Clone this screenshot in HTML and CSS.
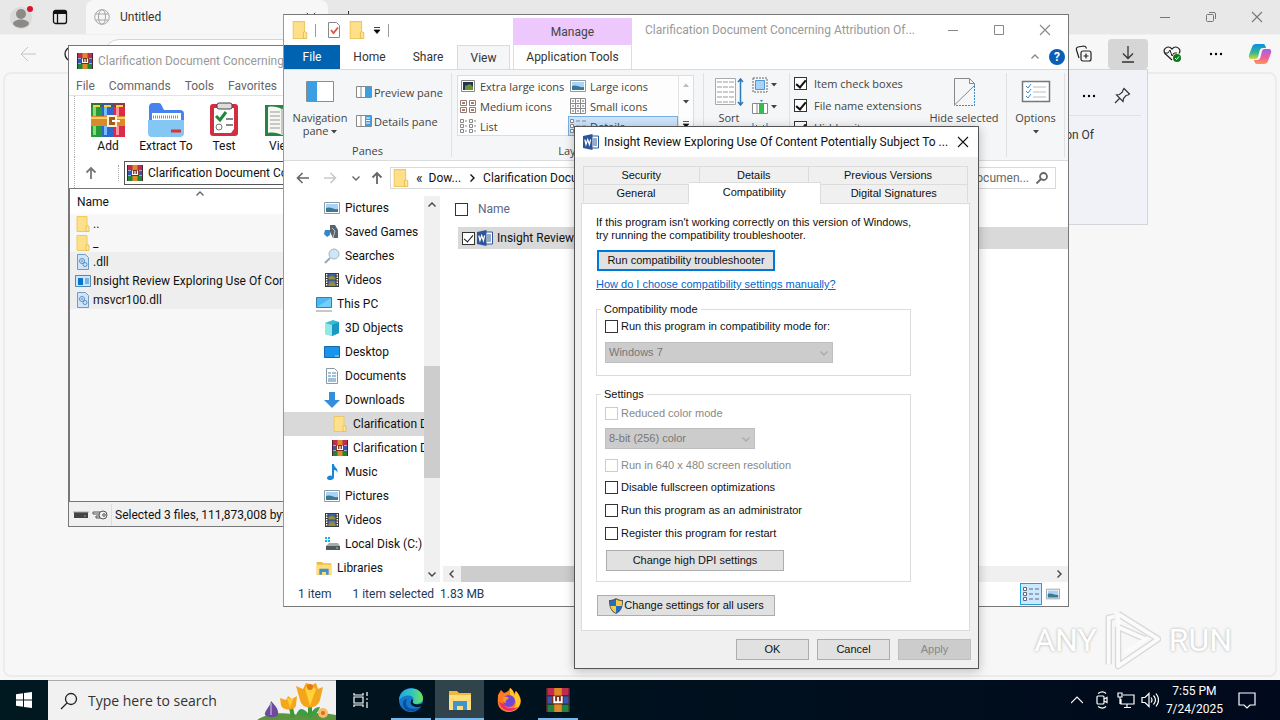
FILE: index.html
```html
<!DOCTYPE html>
<html lang="en">
<head>
    <meta charset="UTF-8">
    <meta name="viewport" content="width=device-width, initial-scale=1.0">
    <title>Desktop</title>
    <link rel="stylesheet" href="styles.css">
</head>
<body>
    <!-- Shared icons -->
    <svg class="sprite" aria-hidden="true">
        <symbol id="i-folder" viewBox="0 0 16 16">
            <path d="M2 .5h10v15H2z" fill="#ffe08a" stroke="#f0c862"/>
            <path d="M12 9.500l2 .8v5.200h-3V10z" fill="#ffe59a" stroke="#e5b94e" stroke-width=".8"/>
        </symbol>
        <symbol id="i-rar" viewBox="0 0 16 16">
            <path d="M0 0h16v5H0z" fill="#c02c4c"/>
            <path d="M0 5.500h16v5H0z" fill="#3a55b0"/>
            <path d="M0 11h16v5H0z" fill="#23823c"/>
            <path d="M0 0h1v16H0zM15 0h1v16h-1z" fill="#4b2430"/>
            <path d="M5.500 0h5v16h-5z" fill="#e08a25"/>
            <path d="M4 5h8v6H4z" fill="#7a2c1c"/>
            <path d="M5.500 5.500v4h5v-4M8 6v3.500" fill="none" stroke="#fff" stroke-width="1.200"/>
        </symbol>
        <symbol id="i-word" viewBox="0 0 16 16">
            <path d="M8.500 2h7v12h-7z" fill="#fff" stroke="#2b579a"/>
            <path d="M10 5h4M10 7h4M10 9h4M10 11h4" stroke="#2b579a"/>
            <path d="M0 2l9.500-2v16L0 14z" fill="#2b579a"/>
            <path d="M1.800 5.500l1.200 5 1.700-5 1.700 5 1.200-5" fill="none" stroke="#fff" stroke-width="1.200"/>
        </symbol>
        <symbol id="i-picture" viewBox="0 0 16 16">
            <path d="M.5 2.500h15v11H.5z" fill="#fff" stroke="#8c9aa5"/>
            <path d="M2 4h12v8H2z" fill="#a9d3f5"/>
            <path d="M2 8c4-2 8 2 12 1v3H2z" fill="#3d7796"/>
        </symbol>
        <symbol id="i-video" viewBox="0 0 16 16">
            <path d="M1 1h14v14H1z" fill="#3a3a3a"/>
            <path d="M4.500 2h7v5.500h-7z" fill="#4262a8"/>
            <path d="M4.500 8.500h7V14h-7z" fill="#6374b3"/>
            <path d="M4.500 5l4-1 3 2v1.500h-7zM4.500 12l4-2 3 2v2h-7z" fill="#8d9430"/>
            <path d="M2.700 2v12M13.300 2v12" stroke="#fff" stroke-width="1.400" stroke-dasharray="1.500 1"/>
        </symbol>
        <symbol id="i-dll" viewBox="0 0 16 16">
            <path d="M2.500.5h8l3 3v12h-11z" fill="#cfe4f8" stroke="#6d9cc5"/>
            <circle cx="7" cy="7" r="2.500" fill="none" stroke="#5b8ec0"/>
            <circle cx="10" cy="10.500" r="2" fill="none" stroke="#5b8ec0"/>
            <circle cx="7" cy="7" r=".8" fill="#3a78b8"/>
        </symbol>
        <symbol id="i-left" viewBox="0 0 16 16"><path d="M14 8H2.500M7.500 3l-5 5 5 5" fill="none" stroke="currentColor" stroke-width="1.600"/></symbol>
        <symbol id="i-up" viewBox="0 0 16 16"><path d="M8 14V3M3.500 7.500L8 3l4.500 4.500" fill="none" stroke="currentColor" stroke-width="1.800"/></symbol>
        <symbol id="i-chevron" viewBox="0 0 10 10"><path d="M1.500 3.500L5 7l3.500-3.500" fill="none" stroke="currentColor" stroke-width="1.400"/></symbol>
        <symbol id="i-caret" viewBox="0 0 6 4"><path d="M0 0h6L3 3.500z" fill="currentColor"/></symbol>
        <symbol id="i-close" viewBox="0 0 12 12"><path d="M1 1l10 10M11 1L1 11" fill="none" stroke="currentColor" stroke-width="1.100"/></symbol>
        <symbol id="i-min" viewBox="0 0 12 12"><path d="M1 6.500h10" stroke="currentColor"/></symbol>
        <symbol id="i-dots" viewBox="0 0 16 16"><circle cx="3" cy="8" r="1.200"/><circle cx="8" cy="8" r="1.200"/><circle cx="13" cy="8" r="1.200"/></symbol>
        <symbol id="i-search" viewBox="0 0 16 16"><circle cx="9.500" cy="6.500" r="3.500" fill="none" stroke="currentColor" stroke-width="1.800"/><path d="M7 9l-4.500 4.500" stroke="currentColor" stroke-width="1.800"/></symbol>
        <symbol id="i-explorer" viewBox="0 0 24 24">
            <path d="M1 3h8l2 2h12v17H1z" fill="#f0b93a"/>
            <path d="M1 7h22v15H1z" fill="#ffdc7c"/>
            <path d="M5 22v-9h14v9h-4v-4H9v4z" fill="#3f93cf"/>
        </symbol>
    </svg>

    <div class="desktop">
        <!-- Browser -->
        <main class="browser">
            <div class="browser-tabs">
                <div class="browser-corner">
                    <svg class="avatar" viewBox="0 0 28 28">
                        <circle cx="13" cy="15" r="11" fill="#dcdad8"/>
                        <circle cx="13" cy="11" r="5" fill="#8d8986"/>
                        <path d="M5 21c0-6 16-6 16 0-3 5-13 5-16 0z" fill="#8d8986"/>
                        <circle cx="22" cy="6" r="3" fill="#d8152b"/>
                    </svg>
                    <svg class="icon-16" viewBox="0 0 16 16"><rect x="1.500" y="1.500" width="13" height="13" rx="2" fill="none" stroke="#111" stroke-width="1.300"/><path d="M1.500 3.500h13" stroke="#111" stroke-width="3"/><path d="M5.500 3v11" stroke="#111" stroke-width="1.300"/></svg>
                </div>
                <div class="browser-tab">
                    <svg class="icon-16" viewBox="0 0 16 16" fill="none" stroke="#a5a5a5"><circle cx="8" cy="8" r="7.300"/><ellipse cx="8" cy="8" rx="3.500" ry="7.300"/><path d="M1.500 5h13M1.500 11h13"/></svg>
                    <span>Untitled</span>
                    <button class="tab-close" aria-label="Close tab"><svg class="icon-10"><use href="#i-close"/></svg></button>
                </div>
                <button class="new-tab" aria-label="New tab"><svg class="icon-12" viewBox="0 0 12 12"><path d="M6.500 0v12M0 6.500h12" stroke="#333"/></svg></button>
                <div class="browser-buttons">
                    <button aria-label="Minimize"><svg class="icon-12"><use href="#i-min"/></svg></button>
                    <button aria-label="Restore"><svg class="icon-12" viewBox="0 0 12 12" fill="none" stroke="currentColor"><rect x="1.500" y="3.500" width="7" height="7" rx="1"/><path d="M4 1.500h5a1.500 1.500 0 0 1 1.500 1.500v5"/></svg></button>
                    <button aria-label="Close"><svg class="icon-12"><use href="#i-close"/></svg></button>
                </div>
            </div>
            <div class="browser-toolbar">
                <button class="browser-back" aria-label="Back"><svg class="icon-16" viewBox="0 0 16 16"><path d="M16 8H1M8 1L1 8l7 7" fill="none" stroke="#c4c4c4"/></svg></button>
                <button class="browser-reload" aria-label="Reload"><svg class="icon-16" viewBox="0 0 16 16"><circle cx="8" cy="8" r="7" fill="none" stroke="#222" stroke-width="1.300"/></svg></button>
                <div class="browser-address"></div>
                <div class="browser-actions">
                    <button aria-label="Collections"><svg class="icon-18" viewBox="0 0 18 18" fill="none" stroke="#222" stroke-width="1.200"><rect x="6" y="6" width="10" height="10" rx="2"/><path d="M11 8.500v5M8.500 11h5M4 13L1.500 5c-.5-1.500 0-2.500 1.500-3L9 1c1.500 0 2 .7 2.500 2.500"/></svg></button>
                    <button class="active" aria-label="Downloads"><svg class="icon-18" viewBox="0 0 18 18" fill="none" stroke="#333" stroke-width="1.300"><path d="M9 1v12M4 8.500L9 13.500l5-5M3 17h12"/></svg></button>
                    <button aria-label="Performance"><svg class="icon-18" viewBox="0 0 18 18"><path d="M9 15L2 8.500C-1 4 5-.5 9 4c4-4.500 10 0 7 4.500" fill="none" stroke="#222" stroke-width="1.200"/><path d="M1 8h4l2-3 2 6 2-3h3" fill="none" stroke="#222"/><circle cx="14" cy="13" r="4" fill="#0e7a1c"/><path d="M12 13l1.500 1.500 2.500-3" fill="none" stroke="#fff"/></svg></button>
                    <button aria-label="More"><svg class="icon-16"><use href="#i-dots"/></svg></button>
                    <button aria-label="Copilot"><svg class="icon-24" viewBox="0 0 24 24">
                        <defs>
                            <linearGradient id="cp1" x2="0" y2="1"><stop stop-color="#0a8fe0"/><stop offset=".6" stop-color="#35b98f"/><stop offset="1" stop-color="#d9d83a"/></linearGradient>
                            <linearGradient id="cp2" x2="0" y2="1"><stop stop-color="#a560e8"/><stop offset=".6" stop-color="#f0609a"/><stop offset="1" stop-color="#ff9a50"/></linearGradient>
                        </defs>
                        <path d="M8 2h7c2 0 2.500 2 3 4h-3c-2 0-3 1-3.500 3L10 15c-.5 1.500-1.500 2-3 2H3c-2 0-2.500-2-2-4L4 5c.7-2 2-3 4-3z" fill="url(#cp1)"/>
                        <path d="M16 22H9c-2 0-2.500-2-3-4h3c2 0 3-1 3.500-3L14 9c.5-1.500 1.500-2 3-2h4c2 0 2.500 2 2 4l-3 8c-.7 2-2 3-4 3z" fill="url(#cp2)"/>
                    </svg></button>
                </div>
            </div>
            <div class="browser-page"></div>
        </main>

        <aside class="downloads">
            <div class="downloads-head">
                <svg class="icon-16"><use href="#i-dots"/></svg>
                <svg class="icon-18" viewBox="0 0 18 18" fill="none" stroke="#333" stroke-width="1.200"><path d="M11 1.500l5.500 5.500-1.500 1-2 .5-2.500 3-.5 3L3.500 8l3-.5L9.500 5l.5-2zM6.500 11.500L2 16"/></svg>
            </div>
            <p>on Of</p>
        </aside>

        <!-- Archive manager -->
        <section class="window archive">
            <div class="archive-title"><svg class="icon-16"><use href="#i-rar"/></svg>Clarification Document Concerning</div>
            <nav class="archive-menu">
                <button>File</button><button>Commands</button><button>Tools</button><button>Favorites</button>
            </nav>
            <div class="archive-toolbar">
                <button>
                    <svg class="icon-36" viewBox="0 0 36 36">
                        <path d="M1 1h11v34H1z" fill="#259b3c"/><path d="M12 1h12v34H12z" fill="#2f68cc"/><path d="M24 1h11v34H24z" fill="#d82c48"/>
                        <path d="M3 5h3v28H3z" fill="#83dd75"/><path d="M14 5h3v28h-3z" fill="#77bcff"/><path d="M26 5h3v28h-3z" fill="#ff91a0"/>
                        <path d="M1 1h34v4H1z" fill="#3d4c48" opacity=".5"/><path d="M3 4h7M14 4h7M26 4h7" stroke="#ffd23c" stroke-width="2"/>
                        <path d="M1 14h34v10H1z" fill="#d98b2b"/><path d="M1 16h34" stroke="#f9cc75" stroke-width="2"/>
                        <path d="M18 14h8v10h-8z" fill="#a85a1c" stroke="#fff2d0" stroke-width="2"/><path d="M22 19h8" stroke="#fff" stroke-width="2"/>
                    </svg>Add
                </button>
                <button>
                    <svg class="icon-36" viewBox="0 0 36 36">
                        <path d="M1 5q0-4 4-4h6q2 0 3 3l2 4h16q4 0 4 4v18H1z" fill="#4782ed"/>
                        <path d="M4 11h29v13H4z" fill="#fff"/><path d="M5 15h26" stroke="#8295a8" stroke-width="3" stroke-dasharray="1 1"/>
                        <path d="M0 18h36v13q0 4-4 4H4q-4 0-4-4z" fill="#84c6f4"/><path d="M23 29h10" stroke="#dc3333" stroke-width="3"/>
                    </svg>Extract To
                </button>
                <button>
                    <svg class="icon-36" viewBox="0 0 36 36">
                        <rect x="4" y="2" width="28" height="32" rx="3" fill="#d22e40"/><path d="M8 6h20v21l-3 4H8z" fill="#fff"/>
                        <rect x="11" y="1" width="15" height="6" rx="2" fill="#ddd" stroke="#444"/>
                        <path d="M10 14l4 4 6-8" fill="none" stroke="#23863c" stroke-width="3"/><path d="M20 17h7M20 23h7" stroke="#888" stroke-width="2"/><circle cx="13" cy="25" r="3" fill="none" stroke="#777"/>
                    </svg>Test
                </button>
                <button>
                    <svg class="icon-36" viewBox="0 0 36 36">
                        <path d="M1 3h34v31H1z" fill="#238444"/><path d="M4 5c5-1 10 0 14 2 4-2 9-3 14-2v26c-5-1-10 0-14 2-4-2-9-3-14-2z" fill="#f6f6f2"/>
                        <path d="M6 10h10M6 14h10M6 18h10M6 22h10M6 26h10M18 7v25" stroke="#999"/><path d="M25 3h6v12l-3-3-3 3z" fill="#c82b3c"/>
                    </svg>View
                </button>
            </div>
            <div class="archive-path">
                <button aria-label="Up one level"><svg class="icon-16"><use href="#i-up"/></svg></button>
                <div class="archive-address"><svg class="icon-16"><use href="#i-rar"/></svg>Clarification Document Co</div>
            </div>
            <div class="archive-list">
                <div class="archive-header">Name<svg class="icon-10 sort-mark"><use href="#i-chevron"/></svg></div>
                <div class="archive-row"><svg class="icon-16"><use href="#i-folder"/></svg>..</div>
                <div class="archive-row"><svg class="icon-16"><use href="#i-folder"/></svg>_</div>
                <div class="archive-row selected"><svg class="icon-16"><use href="#i-dll"/></svg>.dll</div>
                <div class="archive-row selected"><svg class="icon-16" viewBox="0 0 16 16"><path d="M.5 2.500h15v11H.5z" fill="#cfe6fa" stroke="#5588ae"/><path d="M3 5h5v7H3z" fill="#0675cc"/><path d="M10 6h4M10 8h4M10 10h4" stroke="#2484c7"/></svg>Insight Review Exploring Use Of Con</div>
                <div class="archive-row selected"><svg class="icon-16"><use href="#i-dll"/></svg>msvcr100.dll</div>
            </div>
            <div class="archive-status">
                <svg class="icon-16" viewBox="0 0 16 16"><path d="M1 5h14v6H1z" fill="#444"/><path d="M0 5h16" stroke="#aaa"/><path d="M11 9h2" stroke="#50cc60"/></svg>
                <svg class="icon-16" viewBox="0 0 16 16" fill="none" stroke="#555"><circle cx="11" cy="8" r="4"/><circle cx="12" cy="8" r="1.300"/><path d="M8 5H1v2h6M7 9H4v2h4"/></svg>
                <span>Selected 3 files, 111,873,008 byte</span>
            </div>
        </section>

        <!-- File explorer -->
        <section class="window explorer">
            <div class="explorer-top">
                <div class="quick-access">
                    <svg class="icon-18"><use href="#i-folder"/></svg>
                    <i></i>
                    <svg class="icon-16" viewBox="0 0 16 16"><path d="M2.500.5h8l3 3v12h-11z" fill="#fff" stroke="#888"/><path d="M5 8l2.500 3L12 5.500" fill="none" stroke="#dc5441" stroke-width="1.800"/></svg>
                    <svg class="icon-18"><use href="#i-folder"/></svg>
                    <svg class="icon-10" viewBox="0 0 10 10"><path d="M2 2.500h6M2 5h6L5 8.500z" stroke="#111" stroke-width=".8"/></svg>
                    <i></i>
                </div>
                <div class="manage-tab">Manage</div>
                <h1>Clarification Document Concerning Attribution Of...</h1>
                <div class="window-buttons">
                    <button aria-label="Minimize"><svg class="icon-12"><use href="#i-min"/></svg></button>
                    <button aria-label="Maximize"><svg class="icon-12" viewBox="0 0 12 12"><path d="M1.500 1.500h9v9h-9z" fill="none" stroke="currentColor"/></svg></button>
                    <button aria-label="Close"><svg class="icon-12"><use href="#i-close"/></svg></button>
                </div>
            </div>
            <nav class="ribbon-tabs">
                <button class="tab-file">File</button>
                <button class="tab-home">Home</button>
                <button class="tab-share">Share</button>
                <button class="tab-view">View</button>
                <button class="tab-app">Application Tools</button>
                <div class="ribbon-help">
                    <svg class="icon-10 flip"><use href="#i-chevron"/></svg>
                    <button class="help">?</button>
                </div>
            </nav>
            <div class="ribbon">
                <div class="group panes">
                    <div class="group-body">
                        <button class="big">
                            <svg class="icon-30" viewBox="0 0 30 30"><path d="M1.500 4.500h27v20h-27z" fill="#fff" stroke="#8c8c8c"/><path d="M2 5h10v19H2z" fill="#3c9fe4"/></svg>
                            <span>Navigation<br>pane <svg class="caret"><use href="#i-caret"/></svg></span>
                        </button>
                        <div class="small-list">
                            <button><svg class="icon-16" viewBox="0 0 16 16"><path d="M.5 2.500h15v11H.5zM5 3v10" fill="#fff" stroke="#888"/><path d="M9 3h6v10H9z" fill="#3c9fe4"/></svg>Preview pane</button>
                            <button><svg class="icon-16" viewBox="0 0 16 16"><path d="M.5 2.500h15v11H.5zM5 3v10" fill="#fff" stroke="#888"/><path d="M9 3h6v10H9z" fill="#3c9fe4"/><path d="M10 5h4M10 7.500h4M10 10h4" stroke="#fff"/></svg>Details pane</button>
                        </div>
                    </div>
                    <div class="group-label">Panes</div>
                </div>
                <div class="group layout">
                    <div class="gallery">
                        <div class="gallery-items">
                            <button><svg class="icon-16" viewBox="0 0 16 16"><path d="M1.500 2.500h13v11h-13z" fill="#fff" stroke="#888"/><path d="M3 4h10v8H3z" fill="#26344e"/><path d="M5 8l5-2 3 3v3H5z" fill="#6a9138"/></svg>Extra large icons</button>
                            <button><svg class="icon-16"><use href="#i-picture"/></svg>Large icons</button>
                            <button><svg class="icon-16" viewBox="0 0 16 16" fill="#fff" stroke="#8c7c76"><path d="M.5 2.500h6v5h-6zM9.500 2.500h6v5h-6zM.5 9.500h6v5h-6zM9.500 9.500h6v5h-6z"/><path d="M2 5h3M11 5h3M2 12h3M11 12h3" stroke="#b47460" stroke-width="2"/></svg>Medium icons</button>
                            <button><svg class="icon-16" viewBox="0 0 16 16" fill="#fff" stroke="#888"><path d="M.5.5h15v15H.5zM.5 5.500h15M.5 10.500h15M5.500.5v15M10.500.5v15"/><path d="M2 3h2M7 3h2M12 3h2M2 8h2M7 8h2M12 8h2M2 13h2M7 13h2M12 13h2" stroke="#666"/></svg>Small icons</button>
                            <button><svg class="icon-16" viewBox="0 0 16 16" fill="#fff" stroke="#888"><path d="M.5 1.500h3v3h-3zM.5 6.500h3v3h-3zM.5 11.500h3v3h-3zM9.500 1.500h3v3h-3zM9.500 6.500h3v3h-3zM9.500 11.500h3v3h-3zM5 3h2M5 8h2M5 13h2M14 3h2M14 8h2M14 13h2"/></svg>List</button>
                            <button class="selected"><svg class="icon-16" viewBox="0 0 16 16" fill="#fff" stroke="#888"><path d="M.5 1.500h3v3h-3zM.5 6.500h3v3h-3zM.5 11.500h3v3h-3zM6 3h4M6 8h4M6 13h4M12 3h4M12 8h4M12 13h4"/></svg>Details</button>
                        </div>
                        <div class="gallery-scroll">
                            <span class="dim"><svg class="caret flip"><use href="#i-caret"/></svg></span>
                            <span><svg class="caret"><use href="#i-caret"/></svg></span>
                            <span><svg class="icon-10" viewBox="0 0 10 10"><path d="M2 3.500h6M2 6h6L5 9z" stroke="#333" stroke-width=".8"/></svg></span>
                        </div>
                    </div>
                    <div class="group-label">Layout</div>
                </div>
                <div class="group current-view">
                    <button class="big">
                        <svg class="icon-30" viewBox="0 0 30 30"><path d="M1.500 1.500h20v26h-20z" fill="#fff" stroke="#aaa"/><path d="M3 5h17M3 10h17M3 15h17M3 20h17M3 25h17" stroke="#999" stroke-dasharray="5 1"/><path d="M26.500 2v26M24 5l2.500-3L29 5M24 25l2.500 3 2.500-3" fill="none" stroke="#2e79ba" stroke-width="1.500"/></svg>
                        <span>Sort</span>
                    </button>
                    <div class="view-tools">
                        <span><svg class="icon-16" viewBox="0 0 16 16"><path d="M3.500 3.500h9v9h-9z" fill="#a5d3fa" stroke="#4f95cf"/><path d="M1 1h14v14H1z" fill="none" stroke="#666" stroke-dasharray="2 1"/></svg><svg class="caret"><use href="#i-caret"/></svg></span>
                        <span><svg class="icon-16" viewBox="0 0 16 16"><path d="M.5 4.500h15v10H.5zM5 5v9" fill="#fff" stroke="#888"/><path d="M7 5h5v10H7z" fill="#34bd48"/><path d="M8 1h3L9.500 3z" fill="#2e79ba"/></svg><svg class="caret"><use href="#i-caret"/></svg></span>
                        <span><svg class="icon-16" viewBox="0 0 16 16"><path d="M1 2v8M15 2v8M3 6h10M5 4L3 6l2 2M11 4l2 2-2 2" fill="none" stroke="#2e79ba"/></svg></span>
                    </div>
                </div>
                <div class="group show-hide">
                    <div class="checks">
                        <label><input type="checkbox" class="box" checked>Item check boxes</label>
                        <label><input type="checkbox" class="box" checked>File name extensions</label>
                        <label><input type="checkbox" class="box" checked>Hidden items</label>
                    </div>
                    <button class="big hide-selected">
                        <svg class="icon-30" viewBox="0 0 30 30"><path d="M5.500 28V1.500h15l5 5V9M20.500 1.500v5h5M5.500 28L26 8" fill="none" stroke="#888"/><path d="M25.500 9v19.500h-20" fill="none" stroke="#3b8bc9" stroke-dasharray="2 1"/></svg>
                        <span>Hide selected</span>
                    </button>
                </div>
                <div class="group options">
                    <button class="big">
                        <svg class="icon-30" viewBox="0 0 30 30"><path d="M1.500 4.500h27v20h-27z" fill="#fff" stroke="#777" stroke-width="1.500"/><path d="M12 10h13M12 15h13M12 20h13" stroke="#bbb"/><path d="M5 9l2 2 3-4M5 14l2 2 3-4M5 19l2 2 3-4" fill="none" stroke="#3b8bc9"/></svg>
                        <span>Options<br><svg class="caret"><use href="#i-caret"/></svg></span>
                    </button>
                </div>
            </div>
            <div class="address-row">
                <button aria-label="Back"><svg class="icon-16"><use href="#i-left"/></svg></button>
                <button aria-label="Forward" class="forward dim"><svg class="icon-16 turn"><use href="#i-left"/></svg></button>
                <button aria-label="Recent" class="recent"><svg class="icon-10"><use href="#i-chevron"/></svg></button>
                <button aria-label="Up" class="up"><svg class="icon-16"><use href="#i-up"/></svg></button>
                <div class="breadcrumb"><svg class="icon-18"><use href="#i-folder"/></svg><b>«</b><span>Dow...</span><svg class="icon-10 side"><use href="#i-chevron"/></svg><span>Clarification Docu</span></div>
                <div class="search-box"><span>Documen...</span><svg class="icon-16"><use href="#i-search"/></svg></div>
            </div>
            <div class="explorer-body">
                <ul class="tree">
                    <li><svg class="icon-16"><use href="#i-picture"/></svg>Pictures</li>
                    <li><svg class="icon-16" viewBox="0 0 16 16"><path d="M6 1h5l3 5v8H9L6 8z" fill="#59656e"/><path d="M1 6h5v5l-3 2-3-3z" fill="#2e8bcb"/><path d="M8 4l3 3-2 7" fill="none" stroke="#b8c5cd"/></svg>Saved Games</li>
                    <li><svg class="icon-16" viewBox="0 0 16 16"><circle cx="10" cy="6" r="5" fill="#cde7f8" stroke="#a3b5c3"/><path d="M6 10l-5 5" stroke="#98a8b5" stroke-width="2"/></svg>Searches</li>
                    <li><svg class="icon-16"><use href="#i-video"/></svg>Videos</li>
                    <li class="level-0"><svg class="icon-16" viewBox="0 0 16 16"><path d="M.5 1.500h15v10H.5z" fill="#4db8f3" stroke="#337fab"/><path d="M1 11l14-9v9z" fill="#74cef8"/><path d="M0 15h16" stroke="#8c9296"/></svg>This PC</li>
                    <li><svg class="icon-16" viewBox="0 0 16 16"><path d="M1 3l8-3 6 2v11l-7 3-7-2z" fill="#34bfd0"/><path d="M1 3l7 2v11l-7-2z" fill="#92e8e7"/><path d="M8 5l7-3v11l-7 3z" fill="#1898c2"/></svg>3D Objects</li>
                    <li><svg class="icon-16" viewBox="0 0 16 16"><path d="M.5 2.500h15v11H.5z" fill="#1795ec" stroke="#1668ad"/><path d="M11 12h4" stroke="#a8dbff"/></svg>Desktop</li>
                    <li><svg class="icon-16" viewBox="0 0 16 16"><path d="M2.500.5h8l3 3v12h-11z" fill="#fff" stroke="#8b9aa4"/><path d="M4 5h3M8 5h4M4 8h3M8 8h4M4 11h8M4 13h8" stroke="#3f82b3"/></svg>Documents</li>
                    <li><svg class="icon-16" viewBox="0 0 16 16"><path d="M5 0h6v8h5l-8 8-8-8h5z" fill="#338fdb"/></svg>Downloads</li>
                    <li class="level-2 selected"><svg class="icon-16"><use href="#i-folder"/></svg>Clarification D</li>
                    <li class="level-2"><svg class="icon-16"><use href="#i-rar"/></svg>Clarification D</li>
                    <li><svg class="icon-16" viewBox="0 0 16 16"><path d="M8 0h2c0 4 5 4 3 9 0-2-1-3-3-3v7c0 4-7 4-7 1 0-2 3-3 5-2z" fill="#1789dc"/></svg>Music</li>
                    <li><svg class="icon-16"><use href="#i-picture"/></svg>Pictures</li>
                    <li><svg class="icon-16"><use href="#i-video"/></svg>Videos</li>
                    <li><svg class="icon-16" viewBox="0 0 16 16"><path d="M1 1h2v2H1zM4 1h2v2H4zM1 4h2v2H1zM4 4h2v2H4z" fill="#19afe8"/><path d="M2 10l3-3h9l2 3v4H2z" fill="#a4acb0"/><path d="M2 10h14v4H2z" fill="#525a5e"/><path d="M12 12h2" stroke="#70e080"/></svg>Local Disk (C:)</li>
                    <li class="level-0"><svg class="icon-16"><use href="#i-explorer"/></svg>Libraries</li>
                </ul>
                <div class="scroll-v">
                    <svg class="icon-10 flip"><use href="#i-chevron"/></svg>
                    <div class="thumb"></div>
                    <svg class="icon-10"><use href="#i-chevron"/></svg>
                </div>
                <div class="files">
                    <label class="files-head"><input type="checkbox" class="box">Name</label>
                    <label class="file-row"><input type="checkbox" class="box thin" checked><svg class="icon-16"><use href="#i-word"/></svg><span>Insight Review</span></label>
                    <div class="scroll-h">
                        <svg class="icon-10 back"><use href="#i-chevron"/></svg>
                        <div class="thumb"></div>
                        <svg class="icon-10 side"><use href="#i-chevron"/></svg>
                    </div>
                </div>
            </div>
            <footer class="explorer-status">
                <span>1 item</span><span>1 item selected&nbsp; 1.83 MB</span>
                <div class="view-switch">
                    <button class="on" aria-label="Details view"><svg class="icon-16" viewBox="0 0 16 16" fill="#fff" stroke="#667"><path d="M.5 1.500h3v3h-3zM.5 6.500h3v3h-3zM.5 11.500h3v3h-3zM6 3h4M6 8h4M6 13h4M12 3h4M12 8h4M12 13h4"/></svg></button>
                    <button aria-label="Icon view"><svg class="icon-14" viewBox="0 0 16 16"><use href="#i-picture"/></svg></button>
                </div>
            </footer>
        </section>

        <!-- Properties dialog -->
        <section class="window dialog">
            <div class="dialog-title">
                <svg class="icon-16"><use href="#i-word"/></svg>
                <h2>Insight Review Exploring Use Of Content Potentially Subject To ...</h2>
                <button aria-label="Close"><svg class="icon-12"><use href="#i-close"/></svg></button>
            </div>
            <div class="dialog-body">
                <div class="tabs">
                    <div class="tab-row back-row"><button>Security</button><button>Details</button><button>Previous Versions</button></div>
                    <div class="tab-row front-row"><button>General</button><button class="active">Compatibility</button><button>Digital Signatures</button></div>
                </div>
                <div class="tab-page">
                    <p>If this program isn't working correctly on this version of Windows,<br>try running the compatibility troubleshooter.</p>
                    <button class="btn wide focused">Run compatibility troubleshooter</button>
                    <a href="#">How do I choose compatibility settings manually?</a>
                    <fieldset class="mode">
                        <legend>Compatibility mode</legend>
                        <label><input type="checkbox" class="box">Run this program in compatibility mode for:</label>
                        <div class="select-wrap mode-select">
                            <select disabled aria-label="Compatibility mode"><option>Windows 7</option></select>
                            <svg class="icon-10"><use href="#i-chevron"/></svg>
                        </div>
                    </fieldset>
                    <fieldset class="settings">
                        <legend>Settings</legend>
                        <label class="off"><input type="checkbox" class="box" disabled>Reduced color mode</label>
                        <div class="select-wrap color-select">
                            <select disabled aria-label="Color mode"><option>8-bit (256) color</option></select>
                            <svg class="icon-10"><use href="#i-chevron"/></svg>
                        </div>
                        <label class="off"><input type="checkbox" class="box" disabled>Run in 640 x 480 screen resolution</label>
                        <label><input type="checkbox" class="box">Disable fullscreen optimizations</label>
                        <label><input type="checkbox" class="box">Run this program as an administrator</label>
                        <label><input type="checkbox" class="box">Register this program for restart</label>
                        <button class="btn wide">Change high DPI settings</button>
                    </fieldset>
                    <button class="btn wide all-users"><svg class="icon-16" viewBox="0 0 16 16"><path d="M8 0c2 1.500 4.500 2 7 2 0 6-1 11-7 14C2 13 1 8 1 2c2.500 0 5-.5 7-2z" fill="#555"/><path d="M8 1.500V8H2.300C2 6.500 2 4.500 2 3c2 0 4-.5 6-1.500zM8 8h5.700c-.7 3-2.700 5.500-5.700 7z" fill="#1c70c8"/><path d="M8 1.500V8h5.700c.3-1.500.3-3.500.3-5-2 0-4-.5-6-1.500zM8 8H2.300c.7 3 2.700 5.500 5.700 7z" fill="#fcca3e"/></svg>Change settings for all users</button>
                </div>
                <div class="dialog-actions">
                    <button class="btn">OK</button>
                    <button class="btn">Cancel</button>
                    <button class="btn" disabled>Apply</button>
                </div>
            </div>
        </section>

        <div class="watermark">
            <span>ANY</span>
            <svg viewBox="0 0 60 64"><path d="M14 4l43 27-43 29V18M14 18l29 13M4 58V8l6-1" fill="none" stroke="#dadada" stroke-width="7" stroke-linejoin="round"/><path d="M14 4l43 27-43 29V18M14 4v14l29 13-22 15M4 58V8l6-1" fill="none" stroke="#fbfbfb" stroke-width="4" stroke-linejoin="round"/></svg>
            <span>RUN</span>
        </div>

        <!-- Taskbar -->
        <footer class="taskbar">
            <button class="start" aria-label="Start"><svg class="icon-16" viewBox="0 0 16 16" fill="#fff"><path d="M0 2.300L7 1.300v6.300H0zM8 1.100L16 0v7.600H8zM0 8.400h7v6.300l-7-1zM8 8.400h8V16l-8-1.100z"/></svg></button>
            <div class="task-search">
                <svg class="icon-18" viewBox="0 0 18 18" fill="none" stroke="#222" stroke-width="1.300"><circle cx="11" cy="7" r="5.500"/><path d="M7 11l-6 6"/></svg>
                <input type="text" placeholder="Type here to search" aria-label="Search">
                <svg class="flowers" viewBox="0 0 80 40">
                    <path d="M0 40c10-9 30-9 42-6 12-3 28-2 38 0v6z" fill="#5d9440"/>
                    <path d="M37 36l-3-14M54 36V16" stroke="#3f973a" stroke-width="4"/>
                    <path d="M40 34c4-10 8-6 14 0 4-8 8-8 10-8-2 6-6 9-10 10z" fill="#3f9c43"/>
                    <path d="M15 20c6 6 8 10 7 14-2 3-10 3-13 0-1-4 5-8 6-14z" fill="#6b4b9a"/><path d="M15 22v12" stroke="#a18bc5" stroke-width="2"/>
                    <path d="M24 17l6 2 2-4 4 3 5-3-1 9c0 6-14 6-15 0z" fill="#f5a718"/><path d="M31 17l3 10 3-9" fill="#ffcb36"/>
                    <path d="M40 5l7 3 3-6 6 2 4-2 2 6 5-2-3 13c-3 10-18 10-20 0z" fill="#f4a51a"/><path d="M49 7l5 18 6-17-6-4z" fill="#ffd23c"/><circle cx="54" cy="6" r="3" fill="#e87418"/>
                    <circle cx="67" cy="32" r="5" fill="#f4bd6b"/><circle cx="67" cy="32" r="2" fill="#dd6b18"/>
                </svg>
            </div>
            <button class="task task-view" aria-label="Task view"><svg class="icon-18" viewBox="0 0 18 18" fill="none" stroke="#fff" stroke-width="1.200"><path d="M2 2v2h9V2M2 16v-2h9v2M2 6h9v6H2zM15 1v4M15 11v6M14 8h2"/></svg></button>
            <button class="task running" aria-label="Edge"><svg class="icon-26" viewBox="0 0 26 26">
                <defs><linearGradient id="eg" x2="1"><stop stop-color="#28a3e2"/><stop offset=".5" stop-color="#2fc5c2"/><stop offset="1" stop-color="#6ee35a"/></linearGradient></defs>
                <circle cx="13" cy="13" r="12" fill="#1478cc"/><path d="M1 13C2-2 24-2 25 11c0 4-3 6-8 6-3 0-3-2-2-3 3-5-7-9-14-1z" fill="url(#eg)"/><path d="M9 12c-4 7 4 13 13 8-6 8-18 4-17-4 .5-3 2-4 4-4z" fill="#0d4f9d"/><path d="M15 13c-2 4 4 6 10 3l-1 3c-6 3-13-1-11-5 0-1 1-2 2-1z" fill="#001820"/>
            </svg></button>
            <button class="task running current" aria-label="File Explorer"><svg class="icon-24"><use href="#i-explorer"/></svg></button>
            <button class="task" aria-label="Firefox"><svg class="icon-26" viewBox="0 0 26 26"><path d="M2 8l3-5 3 3c3-1 5-2 6-5 3 2 4 4 4 6l2-3c4 4 6 9 4 14-4 10-20 9-22-1-.5-3 0-6 0-9z" fill="#ff7b24"/><path d="M14 1c4 3 4 6 4 8l2-5c4 5 6 10 3 15-2 3-5 5-8 5 8-6 5-13-1-15z" fill="#ffc928"/><path d="M3 15c2 9 13 12 19 5-6 2-13 2-14-3z" fill="#ee2d68"/><circle cx="13" cy="14" r="6" fill="#7145d8"/><path d="M7 11c2-2 4-1 6 0-2 2-4 2-3 5-3 0-4-3-3-5z" fill="#ff9427"/></svg></button>
            <button class="task running" aria-label="WinRAR"><svg class="icon-24"><use href="#i-rar"/></svg></button>
            <div class="tray">
                <svg class="icon-12 flip tray-more" viewBox="0 0 10 10"><path d="M0 2.500l5 5 5-5" fill="none" stroke="#fff"/></svg>
                <svg class="icon-18" viewBox="0 0 18 18" fill="none" stroke="#fff" stroke-width="1.200"><rect x="4" y="5" width="7" height="8" rx="1"/><path d="M11 8l3-1.500v5L11 10M5 2.500c3-2 6-2 8 0M5 15.500c3 2 6 2 8 0"/></svg>
                <svg class="icon-18" viewBox="0 0 18 18" fill="none" stroke="#fff" stroke-width="1.200"><path d="M6 4h11v9H4V8M1 2h4v4H1zM3 6v7M10 13v3M7 16.500h7"/></svg>
                <svg class="icon-18" viewBox="0 0 18 18" fill="none" stroke="#fff" stroke-width="1.200"><path d="M1 6.500h3l4-4v13l-4-4H1zM10 6.500q2 2.500 0 5M12.500 4.500q4 4.500 0 9M15 2.500q5 6.500 0 13"/></svg>
                <time>7:55 PM<br>7/24/2025</time>
                <svg class="icon-18" viewBox="0 0 18 18" fill="none" stroke="#fff" stroke-width="1.200"><path d="M1 2h16v12h-5l-3 3-3-3H1z"/></svg>
            </div>
        </footer>
    </div>
</body>
</html>
```

FILE: styles.css
```css
* {
    margin: 0;
    padding: 0;
    box-sizing: border-box;
}

body {
    font-family: Roboto, "Open Sans", sans-serif;
    font-size: 12px;
    line-height: 16px;
    color: #111;
    overflow: hidden;
}

button {
    font: inherit;
    color: inherit;
    background: none;
    border: none;
    white-space: nowrap;
}

svg {
    display: block;
    flex-shrink: 0;
}

.sprite { position: absolute; width: 0; height: 0; }

.icon-10 { width: 10px; height: 10px; }
.icon-12 { width: 12px; height: 12px; }
.icon-14 { width: 14px; height: 14px; }
.icon-16 { width: 16px; height: 16px; }
.icon-18 { width: 18px; height: 18px; }
.icon-24 { width: 24px; height: 24px; }
.icon-26 { width: 26px; height: 26px; }
.icon-30 { width: 30px; height: 30px; }
.icon-36 { width: 36px; height: 36px; }
.caret { width: 6px; height: 4px; }
.flip { transform: rotate(180deg); }
.turn { transform: rotate(180deg); }
.side { transform: rotate(-90deg); }
.back { transform: rotate(90deg); }

.desktop {
    position: relative;
    display: flex;
    flex-direction: column;
    height: 100vh;
}

/* Browser */
.browser {
    flex: 1;
    display: flex;
    flex-direction: column;
    background: #f7f7f7;
}

.browser-tabs {
    display: flex;
    height: 34px;
    background: #e8e8e8;
}

.browser-corner {
    display: flex;
    align-items: center;
    gap: 16px;
    width: 86px;
    padding-left: 8px;
    background: #e8e8e8;
    border-radius: 0 0 8px 0;
}

.avatar { width: 28px; height: 28px; }

.browser-tab {
    display: flex;
    align-items: center;
    gap: 10px;
    width: 242px;
    padding: 0 12px 0 8px;
    background: #f7f7f7;
    border-radius: 8px 8px 0 0;
    color: #333;
}

.tab-close { margin-left: auto; }

.new-tab {
    display: grid;
    place-items: center;
    width: 40px;
}

.browser-buttons {
    display: flex;
    align-items: center;
    margin-left: auto;
    color: #777;
}

.browser-buttons button {
    display: grid;
    place-items: center;
    width: 46px;
    height: 34px;
}

.browser-toolbar {
    display: flex;
    align-items: center;
    height: 38px;
    padding-left: 20px;
    border-top: 1px solid #f0f0f0;
}

.browser-reload { margin: 0 16px 0 28px; }

.browser-address {
    flex: 1;
    height: 30px;
    margin-left: 8px;
    background: #fff;
    border: 1px solid #d4d4d4;
    border-radius: 15px;
}

.browser-actions {
    display: flex;
    gap: 4px;
    padding-left: 40px;
}

.browser-actions button {
    display: grid;
    place-items: center;
    width: 40px;
    height: 30px;
    border-radius: 4px;
}

.browser-actions .active { background: #d6d6d6; }

.browser-page {
    flex: 1;
    margin: 0 3px 3px;
    border: 2px solid #ececec;
    border-radius: 8px;
}

.downloads {
    position: absolute;
    left: 900px;
    top: 69px;
    width: 248px;
    height: 156px;
    background: #f0f2f7;
    border: 1px solid #d3d5da;
    padding: 0 6px;
    text-align: right;
    color: #333;
}

.downloads-head {
    display: flex;
    align-items: center;
    justify-content: flex-end;
    gap: 16px;
    height: 46px;
    padding: 6px 10px 0 0;
    border-bottom: 1px solid #dde0e5;
}

.downloads p { padding: 11px 47px 0 0; }

/* Windows */
.window {
    position: absolute;
    display: flex;
    flex-direction: column;
    background: #fff;
    border: 1px solid #777;
}

/* Archive manager */
.archive {
    left: 68px;
    top: 45px;
    width: 232px;
    height: 482px;
    white-space: nowrap;
    overflow: hidden;
}

.archive-title {
    display: flex;
    align-items: center;
    gap: 5px;
    height: 30px;
    padding-left: 8px;
    color: #999;
}

.archive-menu {
    display: flex;
    gap: 14px;
    height: 20px;
    padding-left: 7px;
    color: #666;
    border-bottom: 1px solid #e3e3e3;
}

.archive-toolbar {
    display: flex;
    height: 61px;
    margin-left: 5px;
    padding: 6px 0 0 4px;
    border-left: 1px dotted #aaa;
}

.archive-toolbar button {
    display: flex;
    flex-direction: column;
    align-items: center;
    width: 58px;
    flex-shrink: 0;
}

.archive-path {
    display: flex;
    align-items: center;
    height: 31px;
    margin-left: 5px;
    color: #777;
    border-left: 1px dotted #aaa;
}

.archive-path button {
    width: 44px;
    padding-left: 8px;
    border-right: 1px dotted #aaa;
}

.archive-address {
    display: flex;
    align-items: center;
    gap: 5px;
    flex: 1;
    height: 24px;
    margin-left: 5px;
    padding-left: 2px;
    color: #111;
    border: 1px solid #555;
}

.archive-list {
    flex: 1;
    background: #f7f7f7;
    border: solid #777;
    border-width: 1px 0 1px 1px;
}

.archive-header {
    display: flex;
    gap: 86px;
    height: 25px;
    padding: 5px 0 0 7px;
    background: #fff;
}

.sort-mark { transform: rotate(180deg); margin-top: -5px; color: #666; }

.archive-row {
    display: flex;
    align-items: center;
    gap: 2px;
    height: 19px;
    padding-left: 5px;
}

.archive-row.selected { background: #eee; }

.archive-status {
    display: flex;
    align-items: center;
    gap: 3px;
    height: 24px;
    padding: 2px 0 0 4px;
    background: #f0f0f0;
}

.archive-status span {
    padding-left: 3px;
    line-height: 22px;
    border-left: 1px solid #ddd;
}

/* File explorer */
.explorer {
    left: 283px;
    top: 14px;
    width: 786px;
    height: 593px;
    border-left-color: #999;
}

.explorer-top {
    display: flex;
    align-items: center;
    height: 30px;
}

.quick-access {
    display: flex;
    align-items: center;
    gap: 6px;
    width: 229px;
    padding-left: 7px;
}

.quick-access i {
    width: 1px;
    height: 13px;
    margin-right: 4px;
    background: #999;
}

.quick-access i:last-child { margin-right: 0; }

.manage-tab {
    align-self: flex-end;
    width: 119px;
    height: 27px;
    line-height: 28px;
    text-align: center;
    background: #ecc8fc;
    color: #444;
}

.explorer h1 {
    flex: 1;
    padding-left: 13px;
    font-size: 12px;
    font-weight: 400;
    color: #999;
    white-space: nowrap;
}

.window-buttons {
    display: flex;
    color: #888;
}

.window-buttons button {
    display: grid;
    place-items: center;
    width: 46px;
    height: 30px;
}

.ribbon-tabs {
    display: flex;
    height: 24px;
    color: #333;
}

.ribbon-tabs .tab-file {
    width: 56px;
    background: #0063b1;
    color: #fff;
}

.tab-home { width: 59px; }
.tab-share { width: 58px; }

.ribbon-tabs .tab-view {
    width: 53px;
    background: #f5f6f7;
    border: 1px solid #dadbdc;
    border-bottom: none;
}

.ribbon-tabs .tab-app {
    width: 119px;
    margin-left: 3px;
    border: solid #e6d7ee;
    border-width: 0 1px;
}

.ribbon-help {
    display: flex;
    align-items: center;
    gap: 9px;
    margin-left: auto;
    padding-right: 3px;
    color: #888;
}

.help {
    width: 16px;
    height: 16px;
    border-radius: 8px;
    background: #0a5eb4;
    color: #fff;
    font-weight: 700;
}

.ribbon {
    display: flex;
    height: 92px;
    padding-right: 3px;
    background: #f5f6f7;
    border: solid #dadbdc;
    border-width: 1px 0;
    font-family: "Open Sans", sans-serif;
    font-size: 11px;
    line-height: 13px;
    color: #444;
}

.group {
    display: flex;
    margin: 3px 0;
    border-right: 1px solid #e0e1e3;
}

.panes,
.layout {
    flex-direction: column;
}

.group-body { display: flex; }

.group-label {
    margin-top: auto;
    text-align: center;
}

.big {
    display: flex;
    flex-direction: column;
    align-items: center;
    gap: 4px;
    padding-top: 4px;
    height: 66px;
}

.big .caret,
.gallery .caret { display: inline-block; vertical-align: middle; }

.panes { width: 168px; }
.panes .big { width: 72px; }

.small-list {
    display: flex;
    flex-direction: column;
    gap: 13px;
    padding-top: 11px;
}

.small-list button {
    display: flex;
    align-items: center;
    gap: 2px;
}

.layout {
    width: 252px;
    padding: 2px 9px 0 5px;
}

.gallery {
    display: flex;
    height: 61px;
    border: 1px solid #dcdddf;
    background: #fdfdfd;
}

.gallery-items {
    display: grid;
    grid-template-columns: 1fr 1fr;
    flex: 1;
    grid-auto-rows: 20px;
}

.gallery-items button {
    display: flex;
    align-items: center;
    gap: 4px;
    padding-left: 2px;
}

.gallery-items .selected {
    background: #cce4fc;
    border: 1px solid #78aee4;
    padding-left: 1px;
}

.gallery-scroll {
    display: grid;
    width: 15px;
    place-items: center;
    border-left: 1px solid #e3e3e3;
}

.gallery-scroll span { display: flex; }

.dim { opacity: .35; }

.current-view {
    width: 86px;
    padding-left: 8px;
}

.current-view .big { width: 34px; }

.view-tools {
    display: flex;
    flex-direction: column;
    gap: 6px;
    padding: 4px 0 0 6px;
}

.view-tools span {
    display: flex;
    align-items: center;
    gap: 3px;
}

.show-hide { width: 217px; padding-left: 4px; }

.checks {
    display: flex;
    flex-direction: column;
    gap: 9px;
    width: 131px;
    padding-top: 4px;
    white-space: nowrap;
}

label {
    display: flex;
    align-items: center;
}

.checks label { gap: 7px; }

.hide-selected { width: 78px; }

.options { width: 57px; flex: 1; }
.options .big { flex: 1; }

.box {
    appearance: none;
    display: grid;
    place-items: center;
    width: 13px;
    height: 13px;
    flex-shrink: 0;
    background: #fff;
    border: 1px solid #333;
}

.box:checked::after {
    content: "";
    width: 4px;
    height: 8px;
    margin-top: -2px;
    border: solid #111;
    border-width: 0 2px 2px 0;
    transform: rotate(40deg);
}

.box.thin:checked::after { border-width: 0 1px 1px 0; }

.box:disabled { border-color: #ccc; }

.address-row {
    display: flex;
    align-items: center;
    height: 34px;
    padding: 0 12px 0 11px;
    color: #666;
}

.address-row button { margin-right: 11px; }
.address-row .forward { margin-right: 13px; }
.address-row .recent { margin-right: 8px; }
.address-row .up { margin-right: 5px; }

.breadcrumb {
    display: flex;
    align-items: center;
    gap: 6px;
    flex: 1;
    height: 22px;
    padding-left: 1px;
    border: 1px solid #d9d9d9;
    color: #111;
    overflow: hidden;
    white-space: nowrap;
}

.breadcrumb b { font-weight: 400; font-size: 14px; }

.search-box {
    display: flex;
    align-items: center;
    justify-content: flex-end;
    gap: 5px;
    width: 100px;
    height: 22px;
    margin-left: 12px;
    padding-right: 5px;
    border: 1px solid #d9d9d9;
}

.explorer-body {
    display: flex;
    flex: 1;
    min-height: 0;
    padding-top: 1px;
}

.tree {
    width: 140px;
    list-style: none;
    overflow: hidden;
}

.tree li {
    display: flex;
    align-items: center;
    gap: 5px;
    height: 24px;
    padding-left: 40px;
    white-space: nowrap;
}

.tree .level-0 { padding-left: 32px; }
.tree .level-2 { padding-left: 48px; }
.tree .selected { background: #d9d9d9; }

.scroll-v {
    display: flex;
    flex-direction: column;
    align-items: center;
    width: 16px;
    padding: 4px 0 3px;
    background: #f0f0f0;
    color: #444;
}

.scroll-v .thumb {
    width: 16px;
    height: 112px;
    margin: auto 0 91px;
    background: #cdcdcd;
}

.files {
    display: flex;
    flex-direction: column;
    flex: 1;
    padding-left: 3px;
}

.files-head {
    gap: 10px;
    height: 26px;
    padding-left: 12px;
    color: #5a6880;
}

.file-row {
    height: 22px;
    margin: 5px 0 0 15px;
    padding-left: 4px;
    background: #d9d9d9;
}

.file-row svg { margin: 0 4px 0 2px; }

.scroll-h {
    display: flex;
    align-items: center;
    gap: 4px;
    height: 16px;
    margin-top: auto;
    padding: 0 4px;
    background: #f0f0f0;
    color: #444;
}

.scroll-h .thumb {
    width: 440px;
    height: 16px;
    background: #cdcdcd;
    margin-right: auto;
}

.explorer-status {
    display: flex;
    align-items: center;
    gap: 21px;
    height: 24px;
    padding-left: 14px;
    color: #1e395b;
}

.view-switch {
    display: flex;
    margin-left: auto;
    padding-right: 4px;
}

.view-switch button {
    display: grid;
    place-items: center;
    width: 22px;
    height: 22px;
}

.view-switch .on {
    background: #cce8ff;
    border: 1px solid #26a0da;
}

/* Properties dialog */
.dialog {
    left: 574px;
    top: 126px;
    width: 405px;
    border-color: #555;
    background: #f0f0f0;
    box-shadow: 0 2px 10px rgba(0, 0, 0, 0.25);
    white-space: nowrap;
}

.dialog-title {
    display: flex;
    align-items: center;
    gap: 5px;
    height: 30px;
    padding: 0 9px 0 8px;
    background: #fff;
}

.dialog-title h2 {
    flex: 1;
    font-size: 12px;
    font-weight: 400;
}

.dialog-body {
    padding: 9px 7px 8px 6px;
    font-family: "Liberation Sans", Arial, sans-serif;
    font-size: 11px;
    line-height: 13px;
}

.tabs { padding: 0 3px 0 2px; }

.tab-row { display: flex; }

.tab-row button {
    height: 18px;
    border: 1px solid #dcdcdc;
    border-width: 1px 1px 0 0;
}

.tab-row button:first-child { border-left-width: 1px; }

.back-row button { flex: 110; }
.back-row button:first-child { flex: 116; }
.back-row button:last-child { flex: 160; }

.front-row button { flex: 105; }
.front-row button:last-child { flex: 148; }

.front-row .active {
    flex: 132;
    height: 22px;
    margin: -2px 0 -1px;
    padding-bottom: 2px;
    background: #fff;
    z-index: 1;
}

.tab-page {
    display: flex;
    flex-direction: column;
    align-items: flex-start;
    margin-right: 1px;
    padding: 12px 58px 14px 14px;
    background: #fff;
    border: 1px solid #dcdcdc;
}

.tab-page a {
    margin: 7px 0 11px;
    color: #0066cc;
}

.btn {
    width: 73px;
    height: 21px;
    background: #e1e1e1;
    border: 1px solid #adadad;
}

.btn:disabled {
    background: #ccc;
    border-color: #bfbfbf;
    color: #888;
}

.btn.wide { width: 178px; margin-left: 1px; }
.btn.focused { border: 2px solid #0078d7; margin-top: 8px; }

fieldset {
    width: 100%;
    padding: 0 8px;
    border: 1px solid #dcdcdc;
}

legend { padding: 0 3px; margin-left: -4px; }

fieldset label { gap: 3px; }

.mode { margin: 1px 0 12px; padding-bottom: 12px; }
.mode label { margin-top: 4px; }

.select-wrap {
    display: grid;
    align-items: center;
    margin-top: 9px;
    color: #777;
}

.select-wrap select,
.select-wrap svg { grid-area: 1 / 1; }

.select-wrap svg { justify-self: end; margin-right: 4px; color: #aaa; }

.select-wrap select {
    appearance: none;
    height: 21px;
    padding: 0 3px;
    font: inherit;
    color: #777;
    opacity: 1;
    background: #ccc;
    border: 1px solid #bfbfbf;
    border-radius: 0;
}

.mode-select { width: 228px; }
.color-select { width: 150px; }

.settings { padding-bottom: 10px; }
.settings label { margin-top: 10px; }
.settings legend + label { margin-top: 6px; }
.settings .off + label { margin-top: 9px; }
.settings .color-select { margin: 8px 0 10px; }
.settings .btn { margin-top: 10px; }
.off { color: #888; }

.all-users {
    display: flex;
    align-items: center;
    justify-content: center;
    margin-top: 13px;
}

.dialog-actions {
    display: flex;
    justify-content: flex-end;
    gap: 8px;
    margin: 8px 0 0;
}

.watermark {
    position: absolute;
    right: 48px;
    bottom: 48px;
    display: flex;
    align-items: center;
    gap: 8px;
    font-size: 32px;
    line-height: 64px;
    color: #fff;
    text-shadow: 0 0 3px #aaa;
}

.watermark svg { width: 56px; height: 62px; }

/* Taskbar */
.taskbar {
    display: flex;
    height: 40px;
    background: linear-gradient(90deg, #001820, #000a1c);
    color: #fff;
    z-index: 1;
}

.taskbar button {
    display: grid;
    place-items: center;
    width: 48px;
}

.task-search {
    display: flex;
    align-items: center;
    gap: 10px;
    width: 288px;
    padding-left: 12px;
    background: #f1f1f1;
    border: 1px solid #aaa;
    border-width: 1px 0 0;
}

.task-search input {
    flex: 1;
    min-width: 0;
    font-family: "Open Sans", sans-serif;
    font-size: 14px;
    background: none;
    border: none;
}

.task-search input::placeholder { color: #333; }

.flowers { width: 80px; height: 40px; }

.taskbar .task { width: 49px; }
.taskbar .task-view { margin-right: 1px; }

.taskbar .running {
    background: linear-gradient(#76b9ed, #76b9ed) center bottom / 40px 2px no-repeat;
}

.taskbar .current {
    background-color: #31444c;
    background-size: 49px 2px;
}

.tray {
    display: flex;
    align-items: center;
    gap: 6px;
    margin-left: auto;
    padding-right: 24px;
}

.tray-more { margin-right: 4px; }

.tray time {
    padding: 0 9px 0 1px;
    line-height: 18px;
    text-align: center;
}
```
